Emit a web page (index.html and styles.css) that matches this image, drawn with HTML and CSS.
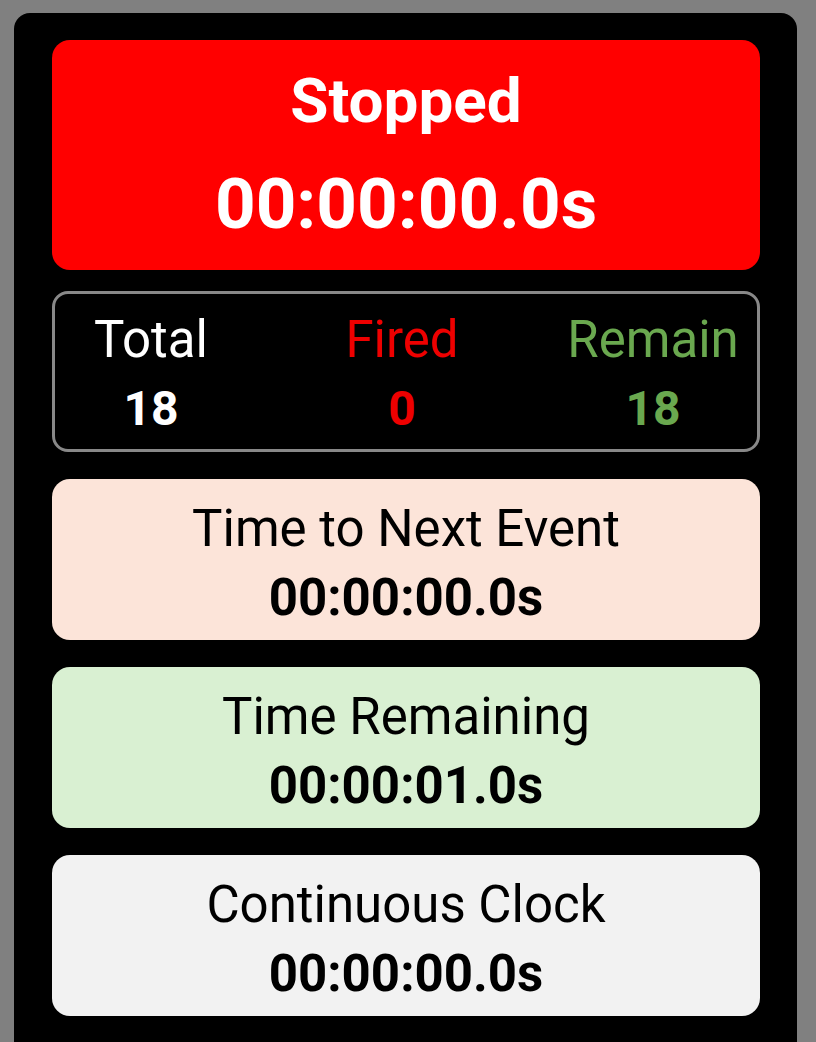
FILE: index.html
```html
<!DOCTYPE html>
<html lang="en">
<head>
    <meta charset="UTF-8">
    <meta name="viewport" content="width=device-width, initial-scale=1.0">
    <title>Show Timer</title>
    <link rel="stylesheet" href="styles.css">
</head>
<body>
    <div class="panel">
        <div class="status">
            <div class="status-label">Stopped</div>
            <div class="status-time">00:00:00.0s</div>
        </div>

        <div class="counts">
            <div class="count">
                <div class="count-label">Total</div>
                <div class="count-value">18</div>
            </div>
            <div class="count fired">
                <div class="count-label">Fired</div>
                <div class="count-value">0</div>
            </div>
            <div class="count remain">
                <div class="count-label">Remain</div>
                <div class="count-value">18</div>
            </div>
        </div>

        <div class="timer next">
            <div class="timer-label">Time to Next Event</div>
            <div class="timer-value">00:00:00.0s</div>
        </div>

        <div class="timer remaining">
            <div class="timer-label">Time Remaining</div>
            <div class="timer-value">00:00:01.0s</div>
        </div>

        <div class="timer clock">
            <div class="timer-label">Continuous Clock</div>
            <div class="timer-value">00:00:00.0s</div>
        </div>
    </div>
</body>
</html>
```

FILE: styles.css
```css
:root {
    --page-bg: #808080;
    --panel-bg: #000000;
    --stopped: #ff0000;
    --fired: #ee0000;
    --remain: #6aa84f;
    --next-bg: #fce4d9;
    --remaining-bg: #d9f0d2;
    --clock-bg: #f2f2f2;
}

* {
    margin: 0;
    padding: 0;
    box-sizing: border-box;
}

html, body {
    height: 100%;
}

body {
    font-family: Roboto, 'Liberation Sans', sans-serif;
    background-color: var(--page-bg);
    overflow: hidden;
    padding: 13px 19px 0 14px;
}

.panel {
    width: 783px;
    height: 100%;
    overflow: hidden;
    background-color: var(--panel-bg);
    border-radius: 16px 16px 0 0;
    padding: 27px 37px 0 38px;
    display: flex;
    flex-direction: column;
    gap: 27px;
}

.status {
    flex: none;
    height: 230px;
    background-color: var(--stopped);
    border-radius: 18px;
    color: white;
    font-weight: 700;
    text-align: center;
    padding-top: 30px;
    margin-bottom: -6px;
}

.status-label {
    font-size: 62px;
    line-height: 62px;
}

.status-time {
    font-size: 71px;
    line-height: 71px;
    margin-top: 36px;
}

.counts {
    flex: none;
    height: 161px;
    border: 3px solid #888888;
    border-radius: 16px;
    display: grid;
    grid-template-columns: repeat(3, 251px);
    justify-content: center;
    padding: 20px 8px 0 0;
    color: white;
    text-align: center;
}

.count-label {
    font-size: 51px;
    line-height: 52px;
}

.count-value {
    font-size: 48px;
    line-height: 48px;
    font-weight: 700;
    margin-top: 19px;
}

.fired {
    color: var(--fired);
}

.remain {
    color: var(--remain);
}

.timer {
    flex: none;
    height: 161px;
    border-radius: 18px;
    text-align: center;
    color: black;
    padding-top: 24px;
}

.timer-label {
    font-size: 51px;
    line-height: 51px;
}

.timer-value {
    font-size: 51px;
    line-height: 51px;
    font-weight: 700;
    margin-top: 18px;
}

.next {
    background-color: var(--next-bg);
}

.remaining {
    background-color: var(--remaining-bg);
}

.clock {
    background-color: var(--clock-bg);
}
```
